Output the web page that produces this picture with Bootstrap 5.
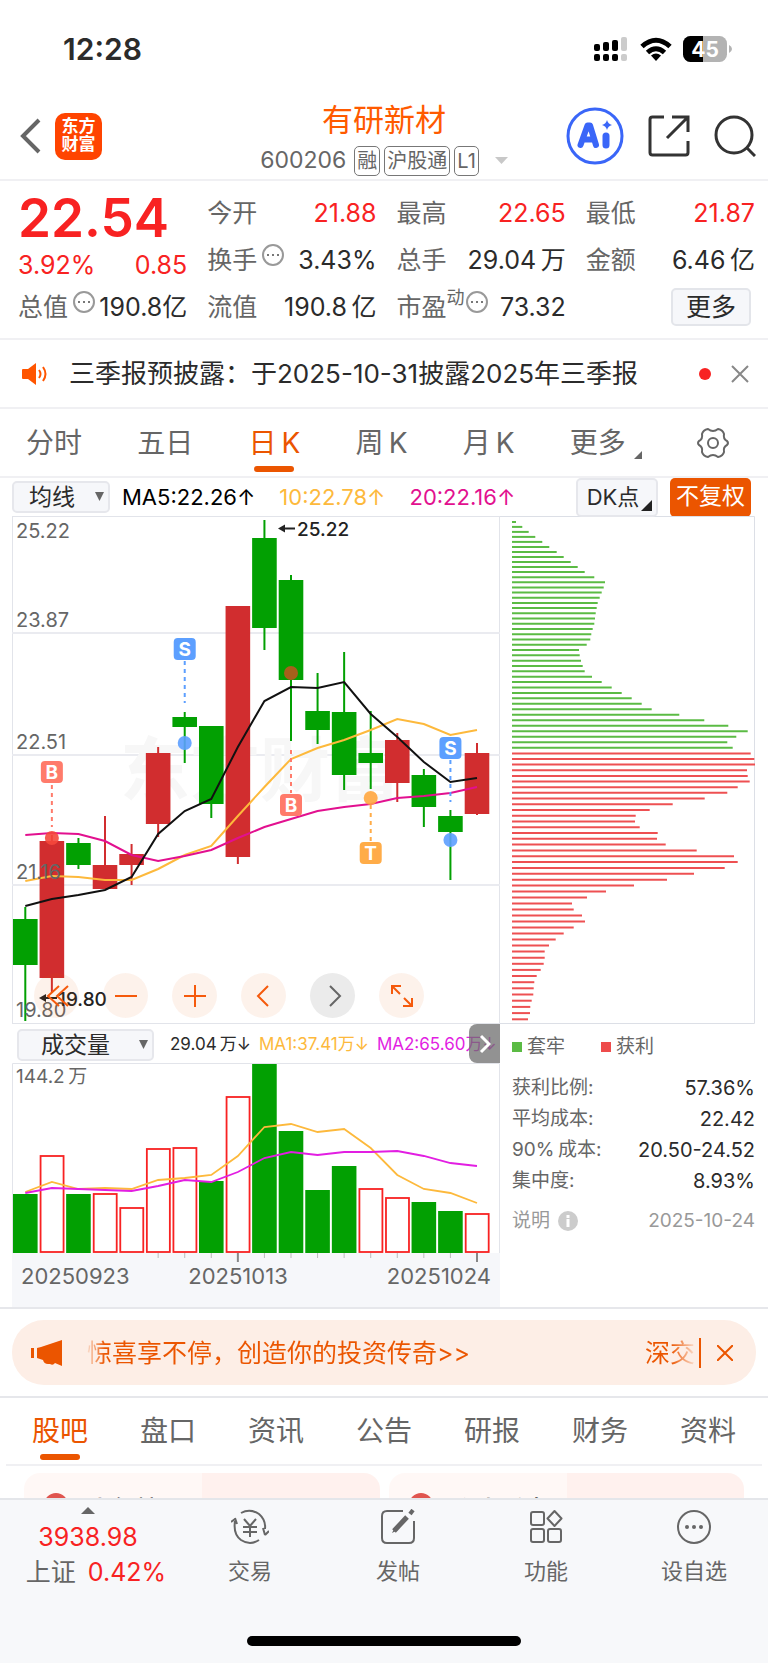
<!DOCTYPE html>
<html lang="zh-CN">
<head>
<meta charset="utf-8">
<meta name="viewport" content="width=device-width, initial-scale=1">
<title>有研新材 600206</title>
<link href="https://cdn.jsdelivr.net/npm/bootstrap@5.3.0/dist/css/bootstrap.min.css" rel="stylesheet">
<style>
:root{--up:#f82222;--brand:#eb5500;--ink:#2b2b2b;--mute:#666;--line:#f0f0f3;--soft:#f6f7fa}
body{font-family:Inter,"Noto Sans CJK SC",sans-serif;color:var(--ink);background:#fff;line-height:1.2}
a{color:inherit;text-decoration:none}
button{font-family:inherit;color:inherit;padding:0;background:none;border:0}
svg{display:block;flex:none}
.chart{width:100%;height:auto}
.up{color:var(--up)}
.mute{color:var(--mute)}
.brand{color:var(--brand)}
.rule{border-bottom:2px solid var(--line)}
.rule-dark{border-bottom:2px solid #e6e7eb}
.status{height:98px;padding:0 36px 0 63px}
.status-icons{gap:11px}
.clock{font-size:30px;font-weight:600}
.topbar{height:83px;padding:0 12px 5px 20px}
.side{flex:1 1 0}
.logo{width:47px;height:47px;margin-left:14px;border-radius:10px;background:#ff4400;color:#fff;font-size:17px;line-height:18px;font-weight:700}
.stock-name{font-size:31px;line-height:38px;color:#ff5a00;font-weight:400}
.sub{margin-top:7px}
.code{font-size:23px}
.tag{border:1px solid #777;border-radius:5px;font-size:20px;line-height:28px;height:30px;padding:0 2px}
.quotes{display:grid;grid-template-columns:repeat(4,1fr);column-gap:20px;padding:8px 13px 8px 18px;height:159px}
.q-row{height:47px;font-size:25px}
.price{font-size:53px;line-height:58px;height:58px;font-weight:600}
.pct{height:36px;font-size:25px}
.dots{align-self:flex-start;margin-top:7px}
.dyn{font-size:18px}
.btn-more{width:80px;height:38px;border:2px solid #e3e5ea;border-radius:5px;background:var(--soft)}
.notice{height:69px;padding:0 19px 0 22px;font-size:26px}
.notice-text{margin-left:21px}
.periods{height:69px;padding:0 39px 0 26px;font-size:28px}
.periods a,.sections a{position:relative;color:var(--mute);line-height:40px}
.periods a.on,.sections a.on{color:var(--brand)}
.on::after{content:"";position:absolute;left:50%;margin-left:-20px;bottom:-9px;width:40px;height:6px;border-radius:3px;background:var(--brand)}
.tools{height:38px;padding:0 17px 0 12px;font-size:22px}
.picker{position:relative}
.picker select{appearance:none;border:2px solid #e6e7ec;border-radius:5px;background:var(--soft);color:var(--ink);height:32px;line-height:28px;padding:0 33px 0 15px;font-size:23px;font-family:inherit}
.picker svg{position:absolute;right:6px;top:11px;pointer-events:none}
.vol-head .picker select{padding:0 42px 0 22px}
.box-btn{height:39px;width:82px;border:2px solid #e6e7ec;border-radius:5px;background:var(--soft);font-size:22px}
.box-hot{height:39px;width:81px;margin-left:12px;border-radius:5px;background:var(--brand);color:#fff;font-size:23px}
.ma-y{color:#fdb93c}.ma-p{color:#e2108f}.ma-v{color:#e21ee2}
.panels{display:grid;grid-template-columns:minmax(0,488fr) minmax(0,255fr);padding:0 13px 0 12px}
.kbox{position:relative}
.kbar{position:absolute;left:22px;bottom:6px;gap:24px}
.kbar button{width:45px;height:45px;border-radius:50%;background:rgba(235,85,0,.08);display:flex;align-items:center;justify-content:center}
.kbar .off{background:#ebebeb}
.vol-head{position:relative;height:39px;padding:2px 0 0 5px;font-size:17px;white-space:nowrap;overflow:hidden}
.vol-head>*{flex:none}
.next{position:absolute;right:0;top:0;width:31px;height:39px;background:rgba(110,110,110,.75);border-radius:8px 0 0 8px;display:flex;align-items:center;justify-content:center}
.stats{padding:12px 0 0 12px;font-size:19px}
.stats dl{margin:14px 0 0}
.stats dl div{height:31px;display:flex;justify-content:space-between;align-items:center}
.stats dt{font-weight:400;color:var(--mute)}
.stats dd{margin:0;font-size:20px}
.note{margin-top:13px;color:#999}
.key{width:10px;height:10px;margin-right:5px;background:#5bbb44}
.key-win{background:#ee4c4c;margin-left:36px}
.promo{margin:11px 12px;height:65px;border-radius:32px;background:#fdeee6;color:var(--brand);padding:0 23px 0 19px;font-size:25px}
.bar{width:2px;height:30px;background:var(--brand)}
.fade-l{background:linear-gradient(90deg,rgba(235,85,0,.1),var(--brand) 18px);-webkit-background-clip:text;background-clip:text;color:transparent}
.fade-r{background:linear-gradient(270deg,rgba(235,85,0,.1),var(--brand) 24px);-webkit-background-clip:text;background-clip:text;color:transparent}
.sections{height:68px;margin:0 6px;padding:0 26px;font-size:28px}
.peek{height:32px;overflow:hidden;padding:7px 24px 0;gap:9px}
.peek a{flex:1;height:70px;border-radius:16px;background:linear-gradient(90deg,#fff8f6 50%,#fff1ee 50%);padding:20px 20px 0;font-size:24px;line-height:34px;font-weight:500;gap:20px;color:#222}
.peek i{width:24px;height:24px;border-radius:50%;background:#e0554f}
.dock{background:#f7f8fa;border-top:2px solid #e4e6ea;min-height:166px}
.dock-items{display:grid;grid-template-columns:176fr 148fr 148fr 148fr 148fr;height:101px}
.dock a{display:flex;flex-direction:column;align-items:center;color:var(--mute);font-size:22px;line-height:30px}
.dock .ico{margin-top:9px;margin-bottom:11px}
.dock .tri{margin:7px 0 6px}
.index-num{font-size:25px;line-height:35px}
.home{width:274px;height:10px;border-radius:5px;background:#000;margin:35px auto 0}
</style>
</head>
<body>
<header>
  <div class="status d-flex align-items-center justify-content-between">
    <span class="clock">12:28</span>
    <div class="status-icons d-flex align-items-center">
      <svg width="36" height="26" viewBox="0 0 36 26"><g><rect x="1" y="8" width="6" height="7" rx="2"/><rect x="10" y="6" width="6" height="9" rx="2"/><rect x="19" y="4" width="6" height="11" rx="2"/><rect x="1" y="18" width="6" height="7" rx="2"/><rect x="10" y="18" width="6" height="7" rx="2"/><rect x="19" y="18" width="6" height="7" rx="2"/></g><g fill="#ccc"><rect x="28" y="1" width="6" height="14" rx="2"/><rect x="28" y="18" width="6" height="7" rx="2"/></g></svg>
      <svg width="32" height="25" viewBox="0 0 32 25" fill="none" stroke="#000" stroke-width="5"><path d="M2 9.500Q16-3 30 9.500"/><path d="M7.500 15.500Q16 8 24.500 15.500"/><path d="M16 24l-5-5.500q5-4 10 0z" fill="#000" stroke="none"/></svg>
      <svg width="49" height="26" viewBox="0 0 49 26"><defs><clipPath id="cell"><rect width="44" height="26" rx="7.500"/></clipPath></defs><g clip-path="url(#cell)"><rect width="44" height="26" fill="#b3b3b3"/><rect width="20" height="26"/></g><path d="M46 9q3 1.500 3 4t-3 4z" fill="#b3b3b3"/><text x="22" y="20.500" text-anchor="middle" font-size="21" font-weight="700" fill="#fff">45</text></svg>
    </div>
  </div>
  <div class="topbar rule d-flex align-items-center">
    <div class="side d-flex align-items-center">
      <button aria-label="返回"><svg width="21" height="36" viewBox="0 0 21 36" fill="none" stroke="#666" stroke-width="4"><path d="M19 2L3 18l16 16"/></svg></button>
      <a href="#" class="logo text-center pt-1">东方<br>财富</a>
    </div>
    <div class="text-center me-2 pt-1">
      <h1 class="stock-name m-0">有研新材</h1>
      <div class="sub d-flex align-items-center mute">
        <span class="code me-2">600206</span><span class="tag me-1">融</span><span class="tag me-1">沪股通</span><span class="tag">L1</span>
        <svg class="ms-3" width="13" height="7" viewBox="0 0 13 7"><path d="M0 0h13L6.500 7z" fill="#c8c8c8"/></svg>
      </div>
    </div>
    <div class="side d-flex align-items-center justify-content-end gap-4">
      <button aria-label="AI"><svg width="58" height="58" viewBox="0 0 58 58"><circle cx="29" cy="29" r="27" fill="none" stroke="#3a66f8" stroke-width="3"/><g fill="none" stroke="#3a66f8" stroke-linecap="round" stroke-linejoin="round"><path d="M14.500 38L21.500 18.500h2.500L30 38M19 32.500h8" stroke-width="6"/><path d="M40 29v9" stroke-width="7"/></g><path d="M41 13q1 4 5 5-4 1-5 5-1-4-5-5 4-1 5-5z" fill="#3a66f8"/></svg></button>
      <button aria-label="分享"><svg width="42" height="42" viewBox="0 0 42 42" fill="none" stroke="#333" stroke-width="3"><path d="M16 2H4.500Q2 2 2 4.500v33Q2 40 4.500 40h33q2.500 0 2.500-2.500V26M24 2h16v15M39 3L19 23"/></svg></button>
      <button aria-label="搜索"><svg width="42" height="42" viewBox="0 0 42 42" fill="none" stroke="#333" stroke-width="3"><circle cx="20" cy="20" r="18"/><path d="M32.500 32.500L41 41"/></svg></button>
    </div>
  </div>
</header>
<main>
<section class="quotes rule">
  <div>
    <div class="price up">22.54</div>
    <div class="pct up d-flex justify-content-between align-items-center"><span>3.92%</span><span>0.85</span></div>
    <div class="q-row d-flex align-items-center"><span class="mute">总值</span><svg class="dots ms-1" width="24" height="24" viewBox="0 0 24 24"><circle cx="12" cy="12" r="10" fill="none" stroke="#999" stroke-width="2"/><path d="M6 11h2v2H6zM11 11h2v2h-2zM16 11h2v2h-2z" fill="#777"/></svg><span class="ms-auto">190.8亿</span></div>
  </div>
  <div>
    <div class="q-row d-flex align-items-center justify-content-between"><span class="mute">今开</span><span class="up">21.88</span></div>
    <div class="q-row d-flex align-items-center"><span class="mute">换手</span><svg class="dots ms-1" width="24" height="24" viewBox="0 0 24 24"><circle cx="12" cy="12" r="10" fill="none" stroke="#999" stroke-width="2"/><path d="M6 11h2v2H6zM11 11h2v2h-2zM16 11h2v2h-2z" fill="#777"/></svg><span class="ms-auto">3.43%</span></div>
    <div class="q-row d-flex align-items-center justify-content-between"><span class="mute">流值</span><span>190.8&thinsp;亿</span></div>
  </div>
  <div>
    <div class="q-row d-flex align-items-center justify-content-between"><span class="mute">最高</span><span class="up">22.65</span></div>
    <div class="q-row d-flex align-items-center justify-content-between"><span class="mute">总手</span><span>29.04&thinsp;万</span></div>
    <div class="q-row d-flex align-items-center"><span class="mute">市盈</span><small class="dyn mute align-self-start mt-1">动</small><svg class="dots" width="24" height="24" viewBox="0 0 24 24"><circle cx="12" cy="12" r="10" fill="none" stroke="#999" stroke-width="2"/><path d="M6 11h2v2H6zM11 11h2v2h-2zM16 11h2v2h-2z" fill="#777"/></svg><span class="ms-auto">73.32</span></div>
  </div>
  <div>
    <div class="q-row d-flex align-items-center justify-content-between"><span class="mute">最低</span><span class="up">21.87</span></div>
    <div class="q-row d-flex align-items-center justify-content-between"><span class="mute">金额</span><span>6.46&thinsp;亿</span></div>
    <div class="q-row d-flex align-items-center justify-content-end pe-1"><button class="btn-more">更多</button></div>
  </div>
</section>
<section class="notice rule d-flex align-items-center">
  <svg width="26" height="22" viewBox="0 0 26 22"><path d="M1 6h5l8-6v22l-8-6H1Q0 16 0 15V7Q0 6 1 6z" fill="#ff5500"/><path d="M17 7q3 4 0 8M21 4q5 7 0 14" fill="none" stroke="#ff5500" stroke-width="2"/></svg>
  <a href="#" class="notice-text">三季报预披露：于2025-10-31披露2025年三季报</a>
  <svg class="ms-auto" width="12" height="12"><circle cx="6" cy="6" r="6" fill="#f82222"/></svg>
  <button class="ms-3 ps-1" aria-label="关闭"><svg width="18" height="18" viewBox="0 0 18 18" stroke="#888" stroke-width="2"><path d="M1 1l16 16M17 1L1 17"/></svg></button>
</section>
<nav class="periods rule d-flex align-items-center justify-content-between">
  <a href="#">分时</a><a href="#">五日</a><a href="#" class="on">日&thinsp;K</a><a href="#">周&thinsp;K</a><a href="#">月&thinsp;K</a>
  <a href="#" class="d-flex align-items-end">更多<svg class="ms-2 mb-1" width="8" height="8"><path d="M8 0v8H0z" fill="#666"/></svg></a>
  <a href="#" aria-label="设置"><svg width="32" height="32" viewBox="0 0 32 32" fill="none" stroke="#666" stroke-width="2"><path d="M11 2q5 4 10 0 5 1 6 5-1 5 3 7 2 2 0 4-4 2-3 7-1 4-6 5-5-4-10 0-5-1-6-5 1-5-3-7-2-2 0-4 4-2 3-7 1-4 6-5z" stroke-linejoin="round"/><circle cx="16" cy="16" r="5"/></svg></a>
</nav>
<section class="tools d-flex align-items-center">
  <div class="picker me-2"><select aria-label="均线"><option>均线</option></select><svg width="9" height="9"><path d="M0 0h9L4.500 9z" fill="#666"/></svg></div>
  <span class="me-4 ps-1 text-black">MA5:22.26↑</span><span class="ma-y me-4">10:22.78↑</span><span class="ma-p">20:22.16↑</span>
  <button class="box-btn ms-auto position-relative pe-2">DK点<svg class="position-absolute bottom-0 end-0 m-1" width="11" height="11"><path d="M11 0v11H0z" fill="#222"/></svg></button>
  <button class="box-hot">不复权</button>
</section>
<section class="panels">
  <div>
    <div class="kbox">
      <svg id="kline" class="chart" viewBox="12 516 488 508"></svg>
      <div class="kbar d-flex">
        <button aria-label="最左"><svg width="26" height="24" viewBox="0 0 26 24" fill="none" stroke="#f55a0c" stroke-width="2"><path d="M15 2L4 12l11 10M24 2L13 12l11 10"/></svg></button>
        <button aria-label="缩小"><svg width="22" height="22" stroke="#f55a0c" stroke-width="2"><path d="M0 11h22"/></svg></button>
        <button aria-label="放大"><svg width="22" height="22" stroke="#f55a0c" stroke-width="2"><path d="M0 11h22M11 0v22"/></svg></button>
        <button aria-label="左移"><svg width="22" height="22" fill="none" stroke="#f55a0c" stroke-width="2"><path d="M15 1L5 11l10 10"/></svg></button>
        <button class="off" aria-label="右移"><svg width="22" height="22" fill="none" stroke="#666" stroke-width="2"><path d="M8 1l10 10L8 21"/></svg></button>
        <button aria-label="全屏"><svg width="22" height="22" fill="none" stroke="#f55a0c" stroke-width="2"><path d="M1 9V1h9M1 1l8 8M21 13v8h-9M21 21l-8-8"/></svg></button>
      </div>
    </div>
    <div class="vol-head d-flex align-items-center">
      <div class="picker me-3"><select aria-label="指标"><option>成交量</option></select><svg width="9" height="9"><path d="M0 0h9L4.500 9z" fill="#666"/></svg></div>
      <span class="me-2">29.04&thinsp;万↓</span><span class="ma-y me-2">MA1:37.41万↓</span><span class="ma-v">MA2:65.60万↓</span>
      <button class="next" aria-label="更多指标"><svg width="12" height="20" fill="none" stroke="#fff" stroke-width="3"><path d="M2 2l8 8-8 8"/></svg></button>
    </div>
    <svg id="volume" class="chart" viewBox="12 1063 488 244"></svg>
  </div>
  <div>
    <svg id="chips" class="chart" viewBox="500 516 255 508"></svg>
    <div class="stats">
      <div class="d-flex align-items-center mute"><span class="key"></span>套牢<span class="key key-win"></span>获利</div>
      <dl>
        <div><dt>获利比例:</dt><dd>57.36%</dd></div>
        <div><dt>平均成本:</dt><dd>22.42</dd></div>
        <div><dt>90%&thinsp;成本:</dt><dd>20.50-24.52</dd></div>
        <div><dt>集中度:</dt><dd>8.93%</dd></div>
      </dl>
      <div class="note d-flex align-items-center"><a href="#">说明</a><svg class="ms-2" width="20" height="20"><circle cx="10" cy="10" r="10" fill="#ccc"/><path d="M8.500 4h3v3h-3zM8.500 8h3v8h-3z" fill="#fff"/></svg><span class="ms-auto">2025-10-24</span></div>
    </div>
  </div>
</section>
<div class="rule-dark"></div>
<section class="promo d-flex align-items-center">
  <svg width="32" height="26" viewBox="0 0 32 26" fill="#eb5500"><path d="M0 8h3v10H0zM6 8l4-1L31 0v26l-7-3q-2 3-5 1l-2 0q-4 0-5-4l-6-2z"/></svg>
  <span class="fade-l ms-4">惊喜享不停，创造你的投资传奇&gt;&gt;</span>
  <span class="fade-r ms-auto">深交</span>
  <span class="bar ms-1"></span>
  <button class="ms-3" aria-label="关闭"><svg width="16" height="16" viewBox="0 0 16 16" stroke="#eb5500" stroke-width="2"><path d="M0 0l16 16M16 0L0 16"/></svg></button>
</section>
<div class="rule-dark"></div>
<nav class="sections rule d-flex align-items-center justify-content-between">
  <a href="#" class="on">股吧</a><a href="#">盘口</a><a href="#">资讯</a><a href="#">公告</a><a href="#">研报</a><a href="#">财务</a><a href="#">资料</a>
</nav>
<section class="peek d-flex">
  <a href="#" class="d-flex align-items-start"><i></i>人气榜</a>
  <a href="#" class="d-flex align-items-start"><i></i>个人看盘</a>
</section>
</main>
<footer class="dock">
  <div class="dock-items">
    <a href="#"><svg class="tri" width="14" height="7"><path d="M0 7L7 0l7 7z" fill="#666"/></svg><span class="up index-num">3938.98</span><span class="index-num ps-3">上证<span class="up ms-2 ps-1">0.42%</span></span></a>
    <a href="#"><svg class="ico" width="38" height="36" viewBox="0 0 38 36" fill="none" stroke="#666" stroke-width="2"><path d="M10 4Q19-1 28 5q7 6 6 15M34 26l4-4M34 26l-2-7M28 31q-9 6-18 0Q2 25 4 12M4 10l-4 3M4 9l2 6M13 10l6 7 6-7M19 17v11M12 18h14M12 23h14"/></svg>交易</a>
    <a href="#"><svg class="ico" width="34" height="36" viewBox="0 0 34 36" fill="none" stroke="#666" stroke-width="2"><path d="M22 2H6Q1 2 1 7v22q0 5 5 5h22q5 0 5-5V12"/><path d="M13 22L26 8" stroke-width="5"/><path d="M29 5l3-4" stroke-width="4"/><path d="M11 24l3-6 3 3z" fill="#666" stroke="none"/></svg>发帖</a>
    <a href="#"><svg class="ico" width="34" height="36" viewBox="0 0 34 36" fill="none" stroke="#666" stroke-width="2"><rect x="2" y="3" width="13" height="13" rx="2"/><rect x="2" y="20" width="13" height="13" rx="2"/><rect x="19" y="20" width="13" height="13" rx="2"/><path d="M25.500 2l7 7.500-7 7.500-7-7.500z" stroke-linejoin="round"/></svg>功能</a>
    <a href="#"><svg class="ico" width="36" height="36" viewBox="0 0 36 36"><circle cx="18" cy="18" r="16" fill="none" stroke="#666" stroke-width="2"/><g fill="#666"><circle cx="11" cy="18" r="2"/><circle cx="18" cy="18" r="2"/><circle cx="25" cy="18" r="2"/></g></svg>设自选</a>
  </div>
  <div class="home"></div>
</footer>
<script src="https://cdn.jsdelivr.net/npm/bootstrap@5.3.0/dist/js/bootstrap.bundle.min.js"></script>
<script>
const GREEN = '#02a002', RED = '#d12d2f';
const cx = i => 25.3 + i * 26.57;
const line = (ys, color, w) => `<polyline points="${ys.map((y, i) => cx(i) + ',' + y).join(' ')}" fill="none" stroke="${color}" stroke-width="${w}"/>`;
const text = (x, y, s, size, extra = 'fill="#666"') => `<text x="${x}" y="${y}" font-size="${size}" ${extra}>${s}</text>`;

/* direction, body top, body bottom, wick top, wick bottom */
const candles = [
  [0,919,965,907,1021],[1,841,978,835,993],[0,843,865,838,869],[1,865,889,816,889],[1,854,865,844,885],
  [1,753,824,747,837],[0,717,727,712,763],[0,726,804,726,818],[1,606,857,606,864],[0,538,628,520,650],
  [0,580,680,575,741],[0,711,730,673,744],[0,712,775,652,790],[0,753,763,711,789],[1,740,783,733,802],
  [0,775,807,769,827],[0,816,832,810,880],[1,753,814,743,815]];
const ma5 = [906,899,895,890,877,834,811,799,747,701,687,688,682,714,737,762,782,778];
const ma10 = [881,876,877,880,880,869,855,846,816,787,759,748,740,730,719,724,735,730];
const ma20 = [835,833,834,841,855,861,856,850,838,827,819,811,807,804,798,796,793,787];
/* letter, column, tag top, dash from, dash to, dot y, tag colour, dot colour */
const marks = [
  ['S',6,638,661,703,743,'#5c9fff','#5c9fff'],['B',1,761,785,827,838,'#ff7b6b','#f5483c'],
  ['B',10,794,750,793,673,'#ff7b6b','#b8591e'],['T',13,842,805,841,798,'#ffac48','#ffa63f'],
  ['S',16,737,760,802,840,'#5c9fff','#5c9fff']];

let k = '<rect x="12.500" y="516.500" width="487" height="507" fill="none" stroke="#e2e4ea"/>';
k += [633, 755, 885].map(y => `<path d="M12 ${y}h488" stroke="#eaebf0" stroke-width="2"/>`).join('');
k += text(120, 796, '东方财富', 70, 'fill="#f7f7f7" font-weight="700"');
k += candles.map(([r, t, b, h, l], i) => {
  const c = r ? RED : GREEN, x = cx(i);
  return `<path d="M${x} ${h}V${l}" stroke="${c}" stroke-width="2"/><rect x="${x - 12.3}" y="${t}" width="24.600" height="${b - t}" fill="${c}"/>`;
}).join('');
k += line(ma10, '#fdb93c', 2) + line(ma20, '#e2108f', 2) + line(ma5, '#111', 2);
k += marks.map(([s, i, y, a, b, d, c, dc]) => `<path d="M${cx(i)} ${a}V${b}" stroke="${c}" stroke-width="2" stroke-dasharray="4 4"/>
  <circle cx="${cx(i)}" cy="${d}" r="7" fill="${dc}" fill-opacity=".9"/><rect x="${cx(i) - 11}" y="${y}" width="22" height="22" rx="4" fill="${c}"/>` +
  text(cx(i), y + 18, s, 19, 'fill="#fff" font-weight="700" text-anchor="middle"')).join('');
k += text(16, 538, '25.22', 20) + text(16, 627, '23.87', 20) + text(16, 749, '22.51', 20) + text(16, 879, '21.16', 20) + text(16, 1017, '19.80', 20);
k += '<path d="M282 528.500h13M44 998h13" stroke="#222" stroke-width="2"/><path d="M278 528.500l7-4v8zM39 998l7-4v8z" fill="#222"/>';
k += text(297, 536, '25.22', 19, 'fill="#222" font-weight="500"') + text(58, 1006, '19.80', 19, 'fill="#222" font-weight="500"');
document.getElementById('kline').innerHTML = k;

/* direction, bar top */
const vols = [[0,1194],[1,1156],[0,1194],[1,1194],[1,1208],[1,1149],[1,1148],[0,1181],[1,1097],[0,1064],[0,1131],[0,1190],[0,1166],[1,1189],[1,1198],[0,1202],[0,1211],[1,1214]];
const v1 = [1192,1182,1189,1188,1189,1180,1178,1175,1156,1127,1124,1132,1129,1148,1175,1189,1193,1203];
const v2 = [1193,1188,1189,1190,1191,1186,1180,1182,1172,1158,1152,1155,1152,1152,1151,1156,1163,1166];
let v = '<rect x="12" y="1253" width="488" height="54" fill="#f6f7fa"/><path d="M12.500 1253V1063.500H499.500V1253" fill="none" stroke="#e2e4ea"/>';
v += vols.map(([r, t], i) => r
  ? `<rect x="${cx(i) - 11.3}" y="${t}" width="23" height="${1252 - t}" fill="none" stroke="#f82222" stroke-width="1.800"/>`
  : `<rect x="${cx(i) - 12.3}" y="${t}" width="24.600" height="${1253 - t}" fill="${GREEN}"/>`).join('');
v += vols.map((_, i) => i < 5 ? '' : `<path d="M${cx(i)} 1253v${i % 9 === 8 ? 9 : 5}" stroke="${i % 9 === 8 ? '#888' : '#bbb'}" stroke-width="${i % 9 === 8 ? 2 : 1}"/>`).join('');
v += line(v1, '#fdb93c', 1.8) + line(v2, '#e21ee2', 1.8);
v += text(16, 1083, '144.2\u2009万', 19) + text(21, 1284, '20250923', 22) + text(238, 1284, '20251013', 22, 'fill="#666" text-anchor="middle"') + text(491, 1284, '20251024', 22, 'fill="#666" text-anchor="end"');
document.getElementById('volume').innerHTML = v;

/* right ends of the cost-distribution bars, in thirds of a unit */
const trapped = [48,67,86,106,127,148,170,191,212,233,254,283,315,311,305,299,293,290,287,285,283,278,274,271,260,237,239,243,248,254,276,305,335,365,395,425,455,538,613,685,743,709,682,698];
const profit = [752,763,766,741,743,749,713,682,614,518,449,407,405,419,473,471,497,590,702,713,674,582,501,402,318,261,216,221,246,255,221,191,167,147,134,134,131,122,110,103,101,100,95,91,90,84];
let c = '<path d="M500 516.500h254.500v507H500" fill="none" stroke="#dcdfe6"/>';
c += trapped.concat(profit).map((e, i) => {
  const y = 522 + (14.814 * i + 0.02191 * i * i) / 3;
  return `<path d="M512 ${y.toFixed(1)}H${(500 + e / 3).toFixed(1)}" stroke="${i < trapped.length ? '#5bbb44' : '#ee5052'}" stroke-width="2"/>`;
}).join('');
document.getElementById('chips').innerHTML = c;
</script>
</body>
</html>
